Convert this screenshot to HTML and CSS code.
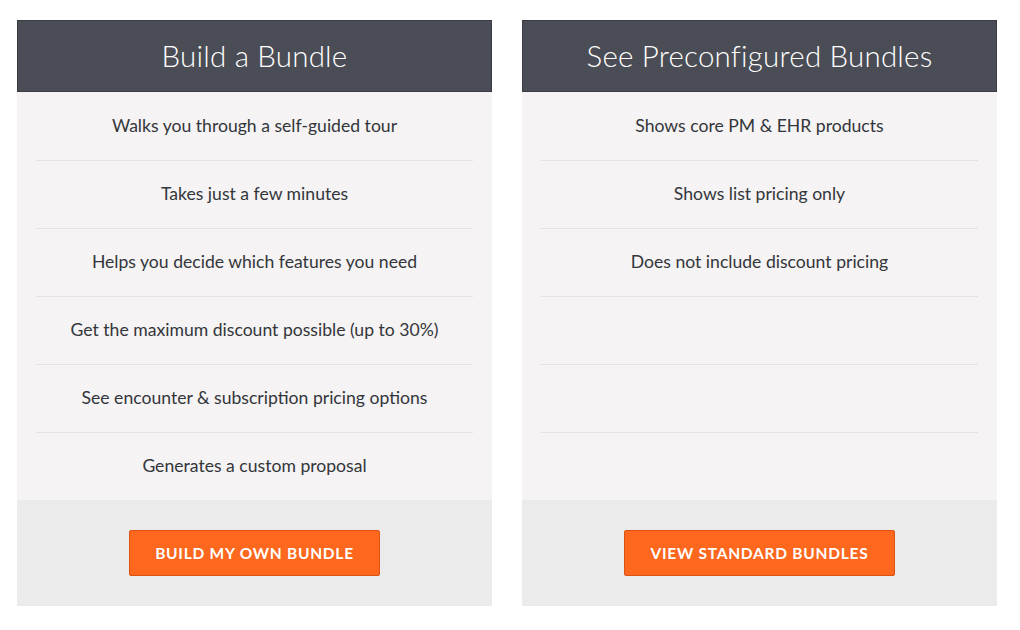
FILE: index.html
```html
<!DOCTYPE html>
<html lang="en">
<head>
<meta charset="utf-8">
<title>Bundles</title>
<link rel="stylesheet" href="styles.css">
</head>
<body>
<div class="plans">
  <section class="plan">
    <h2 class="plan-title">Build a Bundle</h2>
    <ul class="plan-list">
      <li>Walks you through a self-guided tour</li>
      <li>Takes just a few minutes</li>
      <li>Helps you decide which features you need</li>
      <li>Get the maximum discount possible (up to 30%)</li>
      <li>See encounter &amp; subscription pricing options</li>
      <li>Generates a custom proposal</li>
    </ul>
    <div class="plan-foot">
      <a class="btn" href="#">Build my own bundle</a>
    </div>
  </section>
  <section class="plan">
    <h2 class="plan-title">See Preconfigured Bundles</h2>
    <ul class="plan-list">
      <li>Shows core PM &amp; EHR products</li>
      <li>Shows list pricing only</li>
      <li>Does not include discount pricing</li>
      <li></li>
      <li></li>
      <li></li>
    </ul>
    <div class="plan-foot">
      <a class="btn" href="#">View standard bundles</a>
    </div>
  </section>
</div>
</body>
</html>
```

FILE: styles.css
```css
* { box-sizing: border-box; }

body {
  margin: 0;
  background: #ffffff;
  font-family: "Lato", "Open Sans", sans-serif;
  color: #33363b;
}

.plans {
  display: flex;
  gap: 30px;
  padding: 20px 0 0 17px;
}

.plan {
  width: 475px;
  display: flex;
  flex-direction: column;
}

.plan-title {
  margin: 0;
  height: 72px;
  padding-bottom: 2px;
  display: flex;
  align-items: center;
  justify-content: center;
  background: #4a4d55;
  border: 1px solid #3a3c42;
  color: #ffffff;
  font-size: 29.5px;
  font-weight: 300;
  letter-spacing: 0.2px;
}

.plan-list {
  list-style: none;
  margin: 0;
  padding: 0 19px;
  background: #f5f3f3;
}

.plan-list li {
  height: 68px;
  padding-bottom: 2px;
  display: flex;
  align-items: center;
  justify-content: center;
  font-size: 17.6px;
  border-top: 1px solid #e5e2e2;
}

.plan-list li:first-child {
  border-top: none;
}

.plan-foot {
  height: 106px;
  background: #ebebeb;
  display: flex;
  align-items: center;
  justify-content: center;
}

.btn {
  display: inline-flex;
  align-items: center;
  height: 46px;
  padding: 0 25px;
  background: #fd671e;
  border: 1px solid #dd5210;
  border-radius: 2px;
  color: #ffffff;
  text-decoration: none;
  text-transform: uppercase;
  font-size: 15.5px;
  font-weight: 700;
  letter-spacing: 0.75px;
}
```
